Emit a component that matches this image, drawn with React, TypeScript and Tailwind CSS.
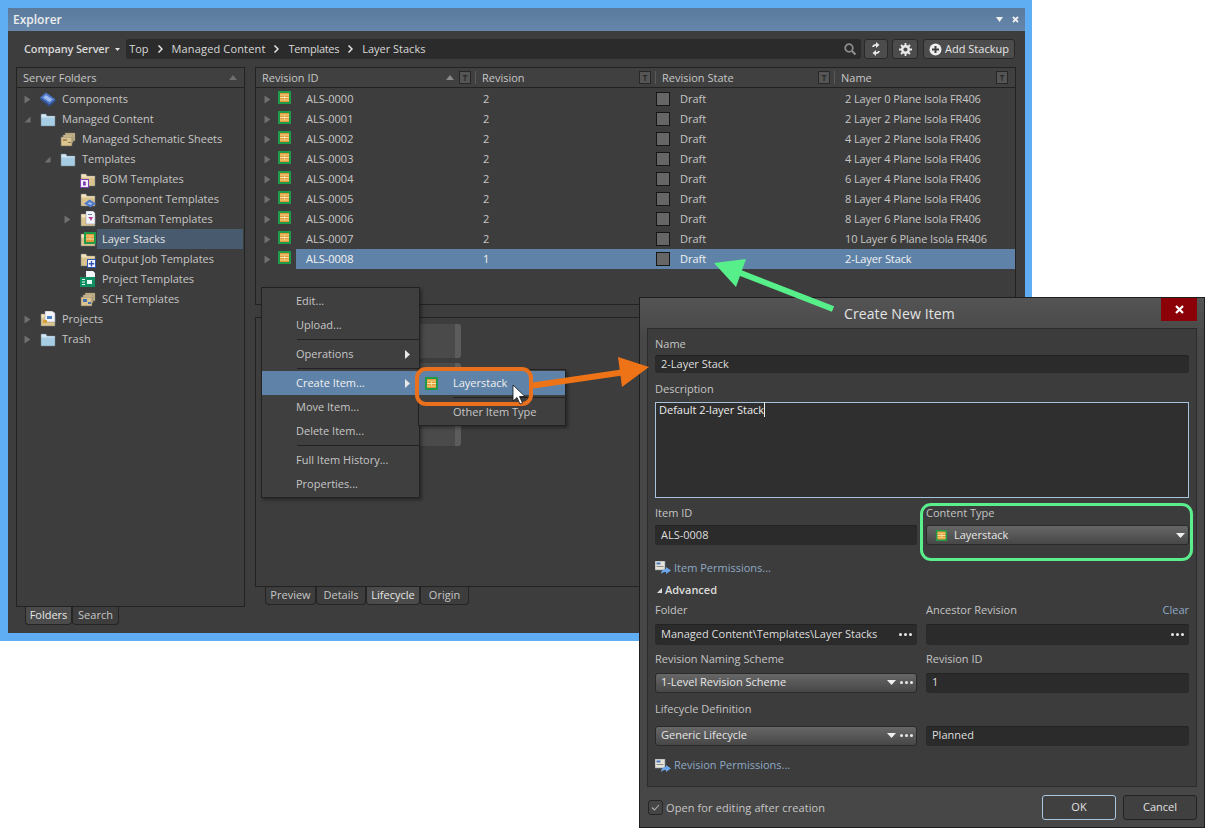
import { ReactNode } from "react";

const rows = [
  ["ALS-0000", "2", "2 Layer 0 Plane Isola FR406"],
  ["ALS-0001", "2", "2 Layer 2 Plane Isola FR406"],
  ["ALS-0002", "2", "4 Layer 2 Plane Isola FR406"],
  ["ALS-0003", "2", "4 Layer 4 Plane Isola FR406"],
  ["ALS-0004", "2", "6 Layer 4 Plane Isola FR406"],
  ["ALS-0005", "2", "8 Layer 4 Plane Isola FR406"],
  ["ALS-0006", "2", "8 Layer 6 Plane Isola FR406"],
  ["ALS-0007", "2", "10 Layer 6 Plane Isola FR406"],
  ["ALS-0008", "1", "2-Layer Stack"],
];

function StackIcon({ className = "" }: { className?: string }) {
  return (
    <svg width="13" height="13" viewBox="0 0 13 13" className={className}>
      <rect width="13" height="13" fill="#1f9a48" />
      <rect x="2" y="2" width="9" height="9" fill="#e29a3a" />
      <rect x="2" y="3.500" width="9" height="1" fill="#f2d98c" />
      <rect x="2" y="6" width="9" height="1" fill="#f7e8ae" />
      <rect x="2" y="8.500" width="9" height="1" fill="#f2d98c" />
      <rect x="6" y="4.500" width="1" height="1.500" fill="#f2d98c" />
      <rect x="6" y="7" width="1" height="1.500" fill="#f2d98c" />
    </svg>
  );
}

function Folder({ color }: { color: string }) {
  const edge = color === "#a6cde3" ? "#d3e6f1" : "#f1e3bd";
  return (
    <>
      <path d="M1 3h5l1 2h8v10H1z" fill={color} stroke="#77828a" strokeWidth="0.5" />
      <path d="M1.500 3.500h4.200l1 2H14.500v1H1.500z" fill={edge} />
    </>
  );
}

function TreeIcon({ kind }: { kind: string }) {
  const tan = "#dcc48f";
  const blue = "#a6cde3";
  return (
    <svg width="16" height="17" viewBox="0 0 16 17" className="shrink-0">
      {kind === "blue" && <Folder color={blue} />}
      {kind === "chip" && (
        <>
          <path d="M0 6.500L6 1.500L15.500 8.500L9.500 13.500z" fill="#4f79c9" />
          <path d="M3 6.500L6 4L12.500 8.500L9.500 11z" fill="#9dbbee" />
          <path d="M0 6.500V8.500L9.500 15.500L15.500 10.500V8.500L9.500 13.500z" fill="#31508f" />
        </>
      )}
      {kind === "sheets" && (
        <>
          <rect x="5" y="2" width="10" height="8" fill={tan} stroke="#6d6a5f" strokeWidth="0.6" />
          <rect x="3" y="4" width="10" height="8" fill="#e8d3a3" stroke="#6d6a5f" strokeWidth="0.6" />
          <rect x="1" y="6" width="11" height="9" fill={tan} stroke="#6d6a5f" strokeWidth="0.6" />
          <rect x="3" y="8" width="4" height="2" fill="#a58d5f" />
          <rect x="8" y="11" width="3" height="1" fill="#8d7a55" />
        </>
      )}
      {kind === "bom" && (
        <>
          <Folder color={tan} />
          <rect x="0.500" y="8.500" width="8" height="8" fill="#f4f0fa" stroke="#7d3fb5" />
          <path d="M3 10.500h2.500l.5 1-.5 1 .5 1-.5 1H3z" fill="#7d3fb5" />
        </>
      )}
      {kind === "comp" && (
        <>
          <Folder color={tan} />
          <path d="M4 12.500L9.500 8.500L16 12.500L10.500 16.500z" fill="#4f79c9" />
          <path d="M7.500 12.500L9.500 11L12.500 12.500L10.500 14z" fill="#9dbbee" />
        </>
      )}
      {kind === "draft" && (
        <>
          <Folder color={tan} />
          <path d="M6 0h7l2 2v11H6z" fill="#f4f6fb" stroke="#8a8f99" strokeWidth="0.5" />
          <path d="M8 6h5l-2 4-1-2z" fill="#b13fa0" />
          <rect x="8" y="3" width="4" height="1" fill="#5b7fb5" />
        </>
      )}
      {kind === "layer" && (
        <>
          <Folder color={tan} />
          <rect x="4" y="1" width="12" height="12" fill="#1f9a48" />
          <rect x="6" y="3" width="8" height="8" fill="#e29a3a" />
          <rect x="6" y="4.500" width="8" height="1" fill="#f2d98c" />
          <rect x="6" y="7.500" width="8" height="1" fill="#f7e8ae" />
          <rect x="9.500" y="5.500" width="1" height="2" fill="#f2d98c" />
        </>
      )}
      {kind === "job" && (
        <>
          <Folder color={tan} />
          <rect x="7.500" y="8.500" width="8" height="8" fill="#f4f6fb" stroke="#2e55b5" />
          <path d="M10.800 10h1.400v2h2v1.400h-2v2h-1.400v-2h-2V12h2z" fill="#2e55b5" />
        </>
      )}
      {kind === "proj" && (
        <>
          <path d="M6 0h7l2 2v13H6z" fill="#f4f6fb" />
          <rect x="0" y="6" width="15" height="10" fill="#0f8f62" />
          <rect x="2" y="8" width="3" height="1" fill="#e5fff3" />
          <rect x="2" y="10.500" width="3" height="1" fill="#e5fff3" />
          <rect x="2" y="13" width="3" height="1" fill="#e5fff3" />
          <rect x="7" y="9" width="5" height="4" fill="#e5fff3" />
        </>
      )}
      {kind === "sch" && (
        <>
          <rect x="5" y="2" width="10" height="8" fill={tan} stroke="#6d6a5f" strokeWidth="0.6" />
          <rect x="3" y="4" width="10" height="8" fill="#e8d3a3" stroke="#6d6a5f" strokeWidth="0.6" />
          <rect x="1" y="6" width="11" height="9" fill={tan} stroke="#6d6a5f" strokeWidth="0.6" />
          <rect x="3" y="8" width="4" height="3" fill="#4a6fb0" />
          <rect x="8" y="11" width="3" height="2" fill="#4a6fb0" />
        </>
      )}
      {kind === "projects" && (
        <>
          <Folder color={tan} />
          <path d="M5 0h7l3 2v9H5z" fill="#f4f6fb" stroke="#8a8f99" strokeWidth="0.5" />
          <rect x="7" y="5" width="5" height="3" fill="#4a80c9" />
          <rect x="3" y="9" width="4" height="3" fill="#d9a23a" />
        </>
      )}
    </svg>
  );
}

function Tri({ dir, className = "" }: { dir: "right" | "open"; className?: string }) {
  return (
    <svg width="7" height="9" viewBox="0 0 7 9" className={`shrink-0 ${className}`}>
      {dir === "right" ? (
        <path d="M0.500 0.500L6.500 4.500L0.500 8.500z" fill="#6f6f6f" />
      ) : (
        <path d="M6.500 1.500V7.500H0.500z" fill="#6f6f6f" />
      )}
    </svg>
  );
}

function TreeRow(props: {
  depth: number;
  tri?: "right" | "open";
  icon: string;
  label: string;
  selected?: boolean;
}) {
  const { depth, tri, icon, label, selected } = props;
  const pads = ["pl-[7px]", "pl-[27px]", "pl-[47px]"];
  return (
    <div className={`flex h-5 items-center ${pads[depth]}`}>
      <div className="flex w-[16px] shrink-0 justify-start">{tri && <Tri dir={tri} />}</div>
      <TreeIcon kind={icon} />
      <div
        className={`ml-[1px] flex h-5 flex-1 items-center pl-[5px] ${selected ? "bg-[#485b6e] text-[#e4e4e4]" : ""}`}
      >
        {label}
      </div>
    </div>
  );
}

function FilterT() {
  return (
    <span className="flex h-[13px] w-[12px] shrink-0 items-center justify-center border border-[#272727] bg-[#555555] text-[8px] leading-none font-bold text-[#2a2a2a]">
      T
    </span>
  );
}

function HeaderCell(props: { label: string; width: string; sort?: boolean; last?: boolean }) {
  const { label, width, sort, last } = props;
  return (
    <div className={`flex h-full items-center pl-[6px] ${width}`}>
      <span className="flex-1 pt-px">{label}</span>
      {sort && (
        <svg width="8" height="5" viewBox="0 0 8 5" className="mr-[5px]">
          <path d="M0 5L4 0L8 5z" fill="#8a8a8a" />
        </svg>
      )}
      <FilterT />
      <span className={`ml-[4px] h-[13px] w-px ${last ? "" : "bg-[#5a5a5a]"}`} />
    </div>
  );
}

function MenuItem({ label, arrow, active }: { label: string; arrow?: boolean; active?: boolean }) {
  return (
    <div
      className={`flex h-6 items-center justify-between pl-[34px] pr-[9px] ${active ? "bg-[#5f83a8] text-[#f0f0f0]" : ""}`}
    >
      <span>{label}</span>
      {arrow && (
        <svg width="5" height="9" viewBox="0 0 5 9">
          <path d="M0 0L5 4.500L0 9z" fill="#e8e8e8" />
        </svg>
      )}
    </div>
  );
}

function MenuSep() {
  return <div className="my-[2px] ml-[35px] h-px bg-[#222222]" />;
}

function Dots() {
  return (
    <span className="flex items-center gap-[2px]">
      <span className="h-[3px] w-[3px] rounded-full bg-[#e8e8e8]" />
      <span className="h-[3px] w-[3px] rounded-full bg-[#e8e8e8]" />
      <span className="h-[3px] w-[3px] rounded-full bg-[#e8e8e8]" />
    </span>
  );
}

function Caret() {
  return (
    <svg width="9" height="5" viewBox="0 0 9 5">
      <path d="M0 0H9L4.500 5z" fill="#f0f0f0" />
    </svg>
  );
}

function Field({ children, height = "h-[20px]" }: { children?: ReactNode; height?: string }) {
  return (
    <div
      className={`flex ${height} items-center justify-between rounded-[3px] bg-[#2b2b2b] pl-[6px] pr-[5px] text-[#dedede] shadow-[inset_0_1px_0_#222222]`}
    >
      {children}
    </div>
  );
}

function Select({ children }: { children: ReactNode }) {
  return (
    <div className="flex h-[20px] items-center justify-between rounded-[3px] border border-[#2a2a2a] bg-gradient-to-b from-[#676767] to-[#474747] pl-[5px] pr-[3px] text-[#e6e6e6]">
      {children}
    </div>
  );
}

function Label({ children, className = "" }: { children: ReactNode; className?: string }) {
  return <div className={`leading-[14px] text-[#c4c4c4] ${className}`}>{children}</div>;
}

function PermIcon() {
  return (
    <svg width="16" height="14" viewBox="0 0 16 14" className="shrink-0">
      <rect x="0" y="0" width="10" height="9" fill="#e6e3d8" stroke="#7b8aa0" strokeWidth="0.6" />
      <rect x="1.500" y="1.500" width="4" height="2" fill="#4a78c0" />
      <rect x="1.500" y="5" width="7" height="1" fill="#8a8a8a" />
      <path d="M6 13c0-3 2-5 5-5V6l5 3.500-5 3.500v-2c-2 0-4 .5-5 2z" fill="#6ca6ea" />
    </svg>
  );
}

function FooterButton({ label, primary }: { label: string; primary?: boolean }) {
  return (
    <div
      className={`flex h-[25px] w-[74px] items-center justify-center rounded-[3px] border bg-[#404040] text-[#e2e2e2] ${primary ? "border-[#a9c6e2]" : "border-[#222222]"}`}
    >
      {label}
    </div>
  );
}

function BottomTab({ label, active, width }: { label: string; active?: boolean; width: string }) {
  return (
    <div
      className={`flex h-[18px] items-center justify-center rounded-b-[4px] border border-t-0 border-[#252525] ${width} ${active ? "bg-[#4b4b4b] text-[#e6e6e6]" : "bg-[#3d3d3d]"}`}
    >
      {label}
    </div>
  );
}

export default function App() {
  return (
    <div className="relative h-[828px] w-[1205px] overflow-hidden bg-white font-['Open_Sans',sans-serif] text-[11px] text-[#c6c6c6]">
      {/* explorer window */}
      <div className="h-[641px] w-[1032px] bg-[#5fadf3] pb-[8px] pl-[8px] pr-[7px] pt-[8px]">
        <div className="flex h-full flex-col bg-[#3d3d3d]">
          <div className="flex h-[23px] shrink-0 items-center justify-between bg-gradient-to-b from-[#5b7a9c] to-[#6587ac] pl-[5px] pr-[6px]">
            <span className="text-[12px] font-semibold text-[#eeeeee]">Explorer</span>
            <div className="flex items-center gap-[9px]">
              <svg width="7" height="5" viewBox="0 0 7 5">
                <path d="M0 0H7L3.500 5z" fill="#f0f0f0" />
              </svg>
              <svg width="7" height="7" viewBox="0 0 7 7">
                <path d="M1 1L6 6M6 1L1 6" stroke="#f0f0f0" strokeWidth="1.800" />
              </svg>
            </div>
          </div>

          <div className="flex h-[36px] shrink-0 items-center pl-[16px] pr-[10px]">
            <span className="font-semibold tracking-[-0.15px] text-[#d8d8d8]">Company Server</span>
            <svg width="5" height="3" viewBox="0 0 5 3" className="ml-[6px]">
              <path d="M0 0H5L2.500 3z" fill="#e0e0e0" />
            </svg>
            <div className="ml-[6px] mr-[3px] flex h-[20px] flex-1 items-center justify-between rounded-[3px] bg-[#2b2b2b] pl-[3px] pr-[4px] text-[#d8d8d8]">
              <div className="flex items-center gap-[9px]">
                <span>Top</span>
                <Chevron />
                <span className="tracking-[0.15px]">Managed Content</span>
                <Chevron />
                <span className="tracking-[-0.3px]">Templates</span>
                <Chevron />
                <span>Layer Stacks</span>
              </div>
              <svg width="14" height="14" viewBox="0 0 14 14">
                <circle cx="6" cy="6" r="3.800" fill="none" stroke="#8c8c8c" strokeWidth="1.800" />
                <path d="M9 9L12.500 12.500" stroke="#8c8c8c" strokeWidth="2.200" />
              </svg>
            </div>
            <div className="flex h-[20px] w-[24px] items-center justify-center rounded-[3px] border border-[#292929] bg-[#4c4c4c]">
              <svg width="12" height="14" viewBox="0 0 12 14">
                <path d="M2 5c.6-2 2-3 4-3V0l3.500 3L6 6V4c-1 0-1.800.4-2.200 1zM10 9c-.6 2-2 3-4 3v2L2.500 11 6 8v2c1 0 1.800-.4 2.200-1z" fill="#e6e6e6" />
              </svg>
            </div>
            <div className="ml-[4px] flex h-[20px] w-[26px] items-center justify-center rounded-[3px] border border-[#292929] bg-[#4c4c4c]">
              <svg width="13" height="13" viewBox="0 0 13 13">
                <circle cx="6.500" cy="6.500" r="3.300" fill="none" stroke="#eaeaea" strokeWidth="2.400" />
                <path d="M6.500 0v3M6.500 10v3M0 6.500h3M10 6.500h3M2 2l2 2M9 9l2 2M11 2L9 4M4 9l-2 2" stroke="#eaeaea" strokeWidth="1.800" />
              </svg>
            </div>
            <div className="ml-[5px] flex h-[20px] w-[92px] items-center justify-center gap-[3px] rounded-[3px] border border-[#292929] bg-[#4c4c4c] text-[#e6e6e6]">
              <svg width="13" height="13" viewBox="0 0 13 13">
                <circle cx="6.500" cy="6.500" r="6" fill="#eeeeee" />
                <path d="M5.500 3h2v2.500H10v2H7.500V10h-2V7.500H3v-2h2.500z" fill="#3f3f3f" />
              </svg>
              Add Stackup
            </div>
          </div>

          <div className="flex gap-[10px] pl-[8px]">
            <div className="w-[229px] shrink-0">
              <div className="h-[540px] border border-[#222222] bg-[#3d3d3d]">
                <div className="flex h-5 items-center justify-between border-b border-[#222222] bg-[#404040] pl-[6px] pr-[7px]">
                  <span className="pt-px">Server Folders</span>
                  <svg width="8" height="5" viewBox="0 0 8 5">
                    <path d="M0 5L4 0L8 5z" fill="#6f6f6f" />
                  </svg>
                </div>
                <div className="pr-px pt-px">
                  <TreeRow depth={0} tri="right" icon="chip" label="Components" />
                  <TreeRow depth={0} tri="open" icon="blue" label="Managed Content" />
                  <TreeRow depth={1} icon="sheets" label="Managed Schematic Sheets" />
                  <TreeRow depth={1} tri="open" icon="blue" label="Templates" />
                  <TreeRow depth={2} icon="bom" label="BOM Templates" />
                  <TreeRow depth={2} icon="comp" label="Component Templates" />
                  <TreeRow depth={2} tri="right" icon="draft" label="Draftsman Templates" />
                  <TreeRow depth={2} icon="layer" label="Layer Stacks" selected />
                  <TreeRow depth={2} icon="job" label="Output Job Templates" />
                  <TreeRow depth={2} icon="proj" label="Project Templates" />
                  <TreeRow depth={2} icon="sch" label="SCH Templates" />
                  <TreeRow depth={0} tri="right" icon="projects" label="Projects" />
                  <TreeRow depth={0} tri="right" icon="blue" label="Trash" />
                </div>
              </div>
              <div className="ml-[9px] flex">
                <BottomTab label="Folders" active width="w-[47px]" />
                <BottomTab label="Search" width="w-[47px]" />
              </div>
            </div>

            <div className="w-[761px] shrink-0">
              <div className="h-[238px] border border-[#222222]">
                <div className="flex h-5 items-center border-b border-[#222222] bg-[#404040]">
                  <HeaderCell label="Revision ID" width="w-[220px]" sort />
                  <HeaderCell label="Revision" width="w-[180px]" />
                  <HeaderCell label="Revision State" width="w-[179px]" />
                  <HeaderCell label="Name" width="w-[178px]" last />
                </div>
                <div className="pt-px">
                  {rows.map(([id, rev, name], i) => (
                    <Row key={id} id={id} rev={rev} name={name} selected={i === 8} />
                  ))}
                </div>
              </div>

              <div className="mt-[12px] flex h-[270px] flex-col gap-[5px] border border-[#222222] pl-[120px] pt-[6px]">
                <Block />
                <Block />
                <div className="mt-[10px]">
                  <Block />
                </div>
              </div>
              <div className="ml-[10px] flex">
                <BottomTab label="Preview" width="w-[51px]" />
                <BottomTab label="Details" width="w-[50px]" />
                <BottomTab label="Lifecycle" active width="w-[54px]" />
                <BottomTab label="Origin" width="w-[49px]" />
              </div>
            </div>
          </div>
        </div>
      </div>

      {/* context menu */}
      <div className="absolute left-[261px] top-[287px] z-10 w-[159px] border border-[#222222] bg-[#3f3f3f] py-[1px] shadow-[2px_2px_3px_rgba(0,0,0,0.35)]">
        <MenuItem label="Edit..." />
        <MenuItem label="Upload..." />
        <MenuSep />
        <MenuItem label="Operations" arrow />
        <MenuSep />
        <MenuItem label="Create Item..." arrow active />
        <MenuItem label="Move Item..." />
        <MenuItem label="Delete Item..." />
        <MenuSep />
        <MenuItem label="Full Item History..." />
        <MenuItem label="Properties..." />
      </div>

      {/* submenu */}
      <div className="absolute left-[418px] top-[369px] z-10 w-[148px] border border-[#222222] bg-[#3f3f3f] py-[1px] shadow-[2px_2px_3px_rgba(0,0,0,0.35)]">
        <div className="flex h-6 items-center bg-[#5f83a8] pl-[6px] text-[#f0f0f0]">
          <StackIcon />
          <span className="ml-[15px]">Layerstack</span>
        </div>
        <div className="my-[2px] ml-[34px] h-px bg-[#222222]" />
        <div className="flex h-6 items-center pl-[34px]">Other Item Type</div>
      </div>

      {/* create new item dialog */}
      <div className="absolute left-[639px] top-[297px] z-20 flex h-[531px] w-[566px] flex-col border border-[#1e1e1e] bg-gradient-to-b from-[#545454] to-[#474747] to-[8%] pl-[7px] pr-[7px]">
        <div className="flex h-[30px] shrink-0 items-center pl-[197px]">
          <span className="text-[14px] tracking-[0.1px] text-[#e4e4e4]">Create New Item</span>
        </div>
        <div className="absolute right-[7px] top-0 flex h-[23px] w-[36px] items-center justify-center bg-[#8c0007]">
          <svg width="9" height="9" viewBox="0 0 9 9">
            <path d="M1 1L8 8M8 1L1 8" stroke="#ffffff" strokeWidth="2.200" />
          </svg>
        </div>

        <div className="h-[459px] shrink-0 border border-[#2c2c2c] bg-[#3c3c3c] px-[7px] pt-[8px]">
          <Label>Name</Label>
          <div className="mt-[4px]">
            <Field height="h-[18px]">2-Layer Stack</Field>
          </div>
          <Label className="mt-[9px]">Description</Label>
          <div className="mt-[6px] h-[96px] border border-[#a7c2dc] bg-[#2f2f2f] pl-[3px] leading-[14px] text-[#ececec]">
            <span className="border-r border-[#ececec]">Default 2-layer Stack</span>
          </div>

          <div className="mt-[8px] grid grid-cols-[262px_263px] gap-x-[9px]">
            <div>
              <Label>Item ID</Label>
              <div className="mt-[5px]">
                <Field>ALS-0008</Field>
              </div>
            </div>
            <div>
              <Label>Content Type</Label>
              <div className="mt-[5px]">
                <Select>
                  <div className="flex items-center pl-[3px]">
                    <StackIcon className="scale-90" />
                    <span className="ml-[6px]">Layerstack</span>
                  </div>
                  <Caret />
                </Select>
              </div>
            </div>
          </div>

          <div className="mt-[16px] flex h-[14px] items-center text-[#8fa9c4]">
            <PermIcon />
            <span className="ml-[3px]">Item Permissions...</span>
          </div>
          <div className="mt-[7px] flex items-center pl-[2px] font-semibold text-[#dcdcdc]">
            <svg width="5" height="5" viewBox="0 0 5 5" className="mr-[3px]">
              <path d="M5 0V5H0z" fill="#dddddd" />
            </svg>
            Advanced
          </div>

          <div className="mt-[4px] grid grid-cols-[262px_263px] gap-x-[9px]">
            <div>
              <Label>Folder</Label>
              <div className="mt-[7px]">
                <Field height="h-[21px]">
                  Managed Content\Templates\Layer Stacks
                  <Dots />
                </Field>
              </div>
            </div>
            <div>
              <div className="flex justify-between">
                <Label>Ancestor Revision</Label>
                <span className="leading-[14px] text-[#8fa9c4]">Clear</span>
              </div>
              <div className="mt-[7px]">
                <Field height="h-[21px]">
                  <span />
                  <Dots />
                </Field>
              </div>
            </div>
            <div className="mt-[7px]">
              <Label>Revision Naming Scheme</Label>
              <div className="mt-[7px]">
                <Select>
                  1-Level Revision Scheme
                  <span className="flex items-center gap-[4px]">
                    <Caret />
                    <Dots />
                  </span>
                </Select>
              </div>
            </div>
            <div className="mt-[7px]">
              <Label>Revision ID</Label>
              <div className="mt-[7px]">
                <Field>1</Field>
              </div>
            </div>
            <div className="mt-[9px]">
              <Label>Lifecycle Definition</Label>
              <div className="mt-[10px]">
                <Select>
                  Generic Lifecycle
                  <span className="flex items-center gap-[4px]">
                    <Caret />
                    <Dots />
                  </span>
                </Select>
              </div>
            </div>
            <div className="mt-[33px]">
              <Field>Planned</Field>
            </div>
          </div>

          <div className="mt-[13px] flex h-[14px] items-center text-[#8fa9c4]">
            <PermIcon />
            <span className="ml-[3px]">Revision Permissions...</span>
          </div>
        </div>

        <div className="flex flex-1 items-center justify-between">
          <div className="mt-[2px] flex items-center">
            <span className="-mt-px ml-[1px] flex h-[15px] w-[15px] items-center justify-center rounded-[3px] border border-[#262626] bg-[#454545]">
              <svg width="9" height="7" viewBox="0 0 9 7">
                <path d="M1 3.500L3.500 6L8 1" fill="none" stroke="#b0b0b0" strokeWidth="1.100" />
              </svg>
            </span>
            <span className="ml-[3px] tracking-[0.1px]">Open for editing after creation</span>
          </div>
          <div className="flex gap-[7px]">
            <FooterButton label="OK" primary />
            <FooterButton label="Cancel" />
          </div>
        </div>
      </div>

      {/* callouts */}
      <div className="pointer-events-none absolute left-[920px] top-[503px] z-30 h-[58px] w-[273px] rounded-[11px] border-[3px] border-[#5bee8c]" />
      <div className="pointer-events-none absolute left-[415px] top-[367px] z-30 h-[39px] w-[118px] rounded-[11px] border-[4px] border-[#e9701c]" />
      <svg width="1205" height="828" viewBox="0 0 1205 828" className="pointer-events-none absolute left-0 top-0 z-30">
        <path d="M533 385.500L622 372.500" stroke="#ee7316" strokeWidth="6" />
        <path d="M618 357L649 367L622 387z" fill="#ee7316" />
        <path d="M833 309L738 272" stroke="#56ef8a" strokeWidth="6" />
        <path d="M714 263L746 259L736 287z" fill="#56ef8a" />
        {/* mouse pointer */}
        <path d="M513 385V401L517 397.500L520 404L522.500 403L519.500 396.500H525z" fill="#ffffff" stroke="#111111" strokeWidth="0.800" />
      </svg>
    </div>
  );
}

function Chevron() {
  return (
    <svg width="5" height="8" viewBox="0 0 5 8">
      <path d="M0.500 0.500L4 4L0.500 7.500" fill="none" stroke="#e6e6e6" strokeWidth="1.500" />
    </svg>
  );
}

function Block() {
  return (
    <div className="flex h-[34px] w-[85px] shrink-0 justify-end rounded-[3px] bg-[#4a4a4a]">
      <div className="h-full w-[6px] rounded-r-[3px] bg-[#5c5c5c]" />
    </div>
  );
}

function Row(props: { id: string; rev: string; name: string; selected: boolean }) {
  const { id, rev, name, selected } = props;
  return (
    <div className="flex h-5 items-center">
      <div className="flex w-[40px] shrink-0 items-center pl-[8px]">
        <Tri dir="right" />
        <StackIcon className="mb-[3px] ml-[7px]" />
      </div>
      <div className={`flex h-5 flex-1 items-center ${selected ? "bg-[#5f83a8] text-[#f2f2f2]" : ""}`}>
        <span className="w-[177px] shrink-0 pl-[10px]">{id}</span>
        <span className="w-[183px] shrink-0 pl-[10px]">{rev}</span>
        <span className="flex w-[189px] shrink-0 items-center">
          <span className="h-[14px] w-[14px] border border-[#161616] bg-[#666666]" />
          <span className="ml-[10px]">Draft</span>
        </span>
        <span className="tracking-[-0.1px]">{name}</span>
      </div>
    </div>
  );
}
